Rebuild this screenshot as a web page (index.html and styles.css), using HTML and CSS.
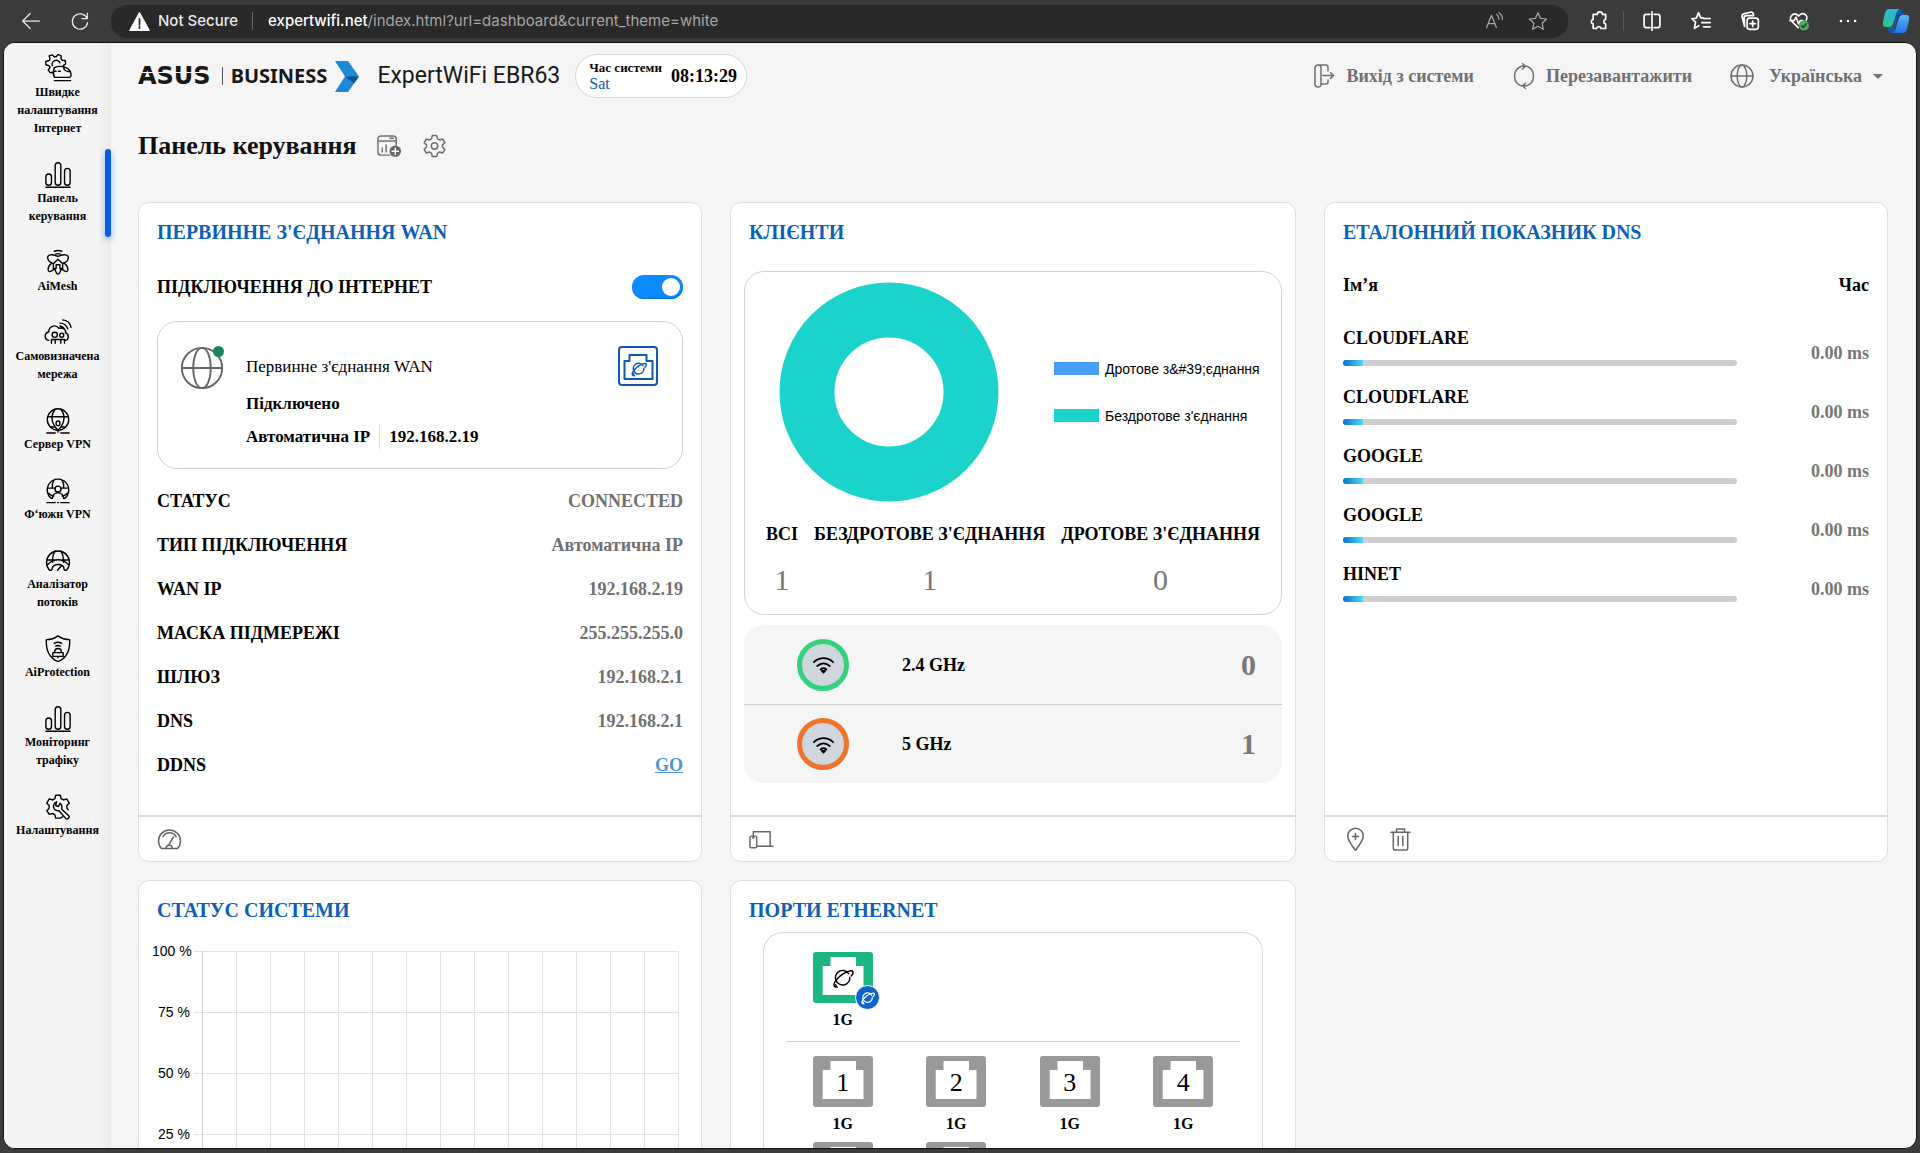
FILE: index.html
```html
<!DOCTYPE html>
<html lang="uk">
<head>
    <meta charset="UTF-8">
    <meta name="viewport" content="width=device-width, initial-scale=1.0">
    <title>ExpertWiFi EBR63</title>
    <link rel="stylesheet" href="styles.css">
</head>
<body>

<!-- shared icons -->
<svg class="sprite" aria-hidden="true">
    <symbol id="i-bars" viewBox="0 0 30 30">
        <rect x="2" y="15" width="6" height="12" rx="3"/>
        <rect x="12" y="3" width="6" height="24" rx="3"/>
        <rect x="22" y="9" width="6" height="18" rx="3"/>
        <path d="M2 29.2h26"/>
    </symbol>
    <symbol id="i-globe" viewBox="0 0 24 24">
        <circle cx="12" cy="12" r="11"/>
        <ellipse cx="12" cy="12" rx="4.8" ry="11"/>
        <path d="M1 12h22"/>
    </symbol>
    <symbol id="i-planet" viewBox="0 0 24 24">
        <path d="M18.6 8.2A7.6 7.6 0 1 0 18.4 16.500c1-1.300 1.400-3 1.200-4.600"/>
        <path d="M4.500 22c-3.600-2 .5-8 5.500-12C15 6 22 3.500 23 6c.4 1.200-.6 3-2 4.500M5 19.500c0 1.500.6 2.300 1.500 2.800"/>
    </symbol>
    <symbol id="i-wifi" viewBox="0 0 24 24">
        <path d="M2 9.500c6-5.500 14-5.500 20 0M5.500 13.500c4-3.600 9-3.600 13 0M9 17.200c2-1.600 4-1.600 6 0"/>
        <path class="fill" d="M10.500 18.800h3L12 20.500z"/>
    </symbol>
    <symbol id="i-gear" viewBox="0 0 24 24">
        <path d="M9.800 1.500h4.400l.7 3.200 2.200 1.300 3.100-1 2.200 3.800-2.400 2.100v2.200l2.400 2.100-2.200 3.800-3.100-1-2.200 1.300-.7 3.200H9.800l-.7-3.200-2.200-1.300-3.100 1-2.200-3.800L4 13.100v-2.200L1.600 8.800 3.800 5l3.100 1 2.200-1.300z"/>
    </symbol>
    <symbol id="i-port" viewBox="0 0 60 51">
        <path d="M3 0h54a3 3 0 0 1 3 3v45a3 3 0 0 1-3 3H3a3 3 0 0 1-3-3V3a3 3 0 0 1 3-3z"/>
        <path class="hole" d="M17.500 5H43v9h7.500v29H9.700V14h7.800z"/>
    </symbol>
</svg>

<div class="browser-bar">
    <button class="bar-btn" aria-label="Back"><svg viewBox="0 0 24 24"><path d="M22 12H3M11 3l-9 9 9 9"/></svg></button>
    <button class="bar-btn" aria-label="Reload"><svg viewBox="0 0 24 24"><path d="M20.500 9a9.200 9.200 0 1 0 .6 5M20.800 2.500V9h-6.500"/></svg></button>
    <div class="address">
        <svg class="warn" viewBox="0 0 24 24"><path d="M12 2 23 22H1z"/><path class="mark" d="M12 9v6.500M12 17.500v2"/></svg>
        <span class="not-secure">Not Secure</span>
        <span class="url"><b>expertwifi.net</b>/index.html?url=dashboard&amp;current_theme=white</span>
        <button class="addr-btn" aria-label="Read aloud"><svg viewBox="0 0 24 24"><path d="M3 20 9 5l6 15M5 15h8M15 4c2 1.500 3 3.500 3 6M18 2c3 2 4.200 5 4 8"/></svg></button>
        <button class="addr-btn" aria-label="Add to favourites"><svg viewBox="0 0 24 24"><path d="m12 2 3 6.800 7.300.8-5.400 5 1.500 7.400-6.400-3.700L5.600 22l1.500-7.400-5.400-5L9 8.800z"/></svg></button>
    </div>
    <button class="bar-btn bright ext" aria-label="Extensions"><svg viewBox="0 0 24 24"><path d="M8 4h2a3 3 0 0 1 6 0h4v6a2.800 2.800 0 0 0 0 5.500V21h-5.500a2.800 2.800 0 0 0-5.500 0H5v-5.500a2.800 2.800 0 0 1 0-5.500V4z"/></svg></button>
    <button class="bar-btn bright" aria-label="Split screen"><svg viewBox="0 0 24 24"><path d="M9.500 4H5a2.500 2.500 0 0 0-2.500 2.500v11A2.500 2.500 0 0 0 5 20h4.500M14.500 4H19a2.500 2.500 0 0 1 2.500 2.500v11A2.500 2.500 0 0 1 19 20h-4.500M12 1v22"/></svg></button>
    <button class="bar-btn bright" aria-label="Favourites"><svg viewBox="0 0 24 24"><path d="M15 8.500 11.500 8 9 2 6.500 8.500l-5.500.8 4.500 4L4 21l5.500-3.500M15 9h8M13 14h10M15 19h8"/></svg></button>
    <button class="bar-btn bright" aria-label="Collections"><svg viewBox="0 0 24 24"><rect x="8.500" y="8.500" width="13.500" height="13.500" rx="3"/><path d="M15.200 12v6.500M12 15.200h6.500M5.500 18.500 2.500 7a3 3 0 0 1 2-3.500l8-2a3 3 0 0 1 3.500 2l.5 2H8a3 3 0 0 0-3 3z"/></svg></button>
    <button class="bar-btn bright" aria-label="Browser essentials"><svg viewBox="0 0 24 24"><path d="M11 20 3 12c-4-5 3-12 8.500-6C17-.5 24 6 20.500 11M1 11.500h5l2.500-4 3 8 2-4h3"/><circle class="ok" cx="18" cy="17.500" r="6"/><path class="tick" d="m15.200 17.800 2 2 3.600-4.400"/></svg></button>
    <button class="bar-btn bright" aria-label="Menu"><svg viewBox="0 0 24 24"><path class="dots" d="M3.500 12h.1M12 12h.1M20.500 12h.1"/></svg></button>
    <button class="bar-btn copilot" aria-label="Copilot">
        <svg viewBox="0 0 28 28">
            <defs>
                <linearGradient id="cp1" x1="0" y1="0" x2="0" y2="1"><stop offset="0" stop-color="#2bb7e3"/><stop offset="1" stop-color="#35c08f"/></linearGradient>
                <linearGradient id="cp2" x1="0" y1="0" x2="0" y2="1"><stop offset="0" stop-color="#5fb8ff"/><stop offset="1" stop-color="#1b74ea"/></linearGradient>
            </defs>
            <path fill="#1556a8" d="M12 2h6q3 0 4 6h-6L12 26H9q-3 0-3-6h6z"/>
            <path fill="url(#cp1)" d="M7 2h10q-2 1-3 5l-3 10q-1 3-4 3H4q-4 0-3-5l2-9q1-4 4-4z"/>
            <path fill="url(#cp2)" d="M21 8h3q4 0 3 5l-2 9q-1 4-4 4H11q2-1 3-5l3-10q1-3 4-3z"/>
        </svg>
    </button>
</div>

<div class="frame">
    <nav class="sidebar">
        <a href="#" class="nav-item">
            <svg viewBox="0 0 30 30"><path d="M10.500 22.500l-1-3-3 .5-2-3 2-2.500-.8-1.800L2 11.500V8l3.500-1 1-1.800L5.500 2l3.300-1L11 3h2l2.200-2.500 3.200 1.500-.2 3.200 1.500 1.500 3 .3.500 3.500-2.500 2M9 12.500a4.200 4.200 0 0 1 8-3"/><path d="M11 14.500c8-3 18 0 18 8 0 2-1 2.500-2.500 2.500H12c-2 0-2.500-5-1-10.500zM21 14.500c.3 3 2 4.500 7 4.500M10.500 18.500h2.500M15.500 18.500h2M11 28.500h17.500"/></svg>
            <span>Швидке налаштування Інтернет</span>
        </a>
        <a href="#" class="nav-item active">
            <svg><use href="#i-bars"/></svg>
            <span>Панель керування</span>
        </a>
        <a href="#" class="nav-item">
            <svg viewBox="0 0 30 30"><path d="M11 3.500c2.500-1 5.500-1 8 0M12.500 6.500c1.500-.6 3.500-.6 5 0"/><path d="M15 9c-6-3-12-2-11 2 .6 3 3 4.500 5 5-3 2-5 5-4.500 8 1 3 5 0 7-2 1 4 2 6 3.500 6s2.500-2 3.500-6c2 2 6 5 7 2 .5-3-1.500-6-4.500-8 2-.5 4.400-2 5-5 1-4-5-5-11-2zM10 17l5-5 5 5v5h-3v-4h-4v4h-3z"/></svg>
            <span>AiMesh</span>
        </a>
        <a href="#" class="nav-item">
            <svg viewBox="0 0 30 30"><path d="M5 24c-5-1-5-8 0-9 0-6 7-9 11-4 5-1 8 2 7 5 4 1 4 7 0 8M8 27v-4h4v4M18 27v-4h4v4M12 23h6M17 5.500c4 0 7 2 8.500 6M20 2c5 .5 8 3.500 9 8M17 8.500c2.500.3 4 1.500 5 3.500"/><circle cx="11.500" cy="18" r="2.800"/><circle cx="19" cy="18.500" r="2.200"/></svg>
            <span>Самовизначена мережа</span>
        </a>
        <a href="#" class="nav-item">
            <svg viewBox="0 0 30 30"><circle cx="15" cy="14.500" r="11.500"/><path d="M4 11.500h22M7 22.500h4M19 22.500h4M12 3.500C9 7 8.500 10 8.500 12c0 6 3 10.500 6.500 14 3.500-3.500 6.500-8 6.500-14 0-2-.5-5-3.500-8.500M15 26v2M3 29h9M18 29h9"/><rect x="13" y="16" width="4" height="5" rx="2"/></svg>
            <span>Сервер VPN</span>
        </a>
        <a href="#" class="nav-item">
            <svg viewBox="0 0 30 30"><path d="M8 24a11.500 11.500 0 1 1 14 0M4 13h8M18 13h8M12 3.500C9 6 8.500 9 9 13M18 3.500c3 2.500 3.500 5.500 3 9.500M9 24c0-8 12-8 12 0M5 18.500c2 2 4 3 5.500 3M25 18.500c-2 2-4 3-5.500 3M3 28.500h9M18 28.500h9M14.500 28.500h1"/><circle cx="15" cy="14" r="3.200"/></svg>
            <span>Ф‘южн VPN</span>
        </a>
        <a href="#" class="nav-item">
            <svg viewBox="0 0 30 30"><path d="M5.500 25.500a12.300 12.300 0 1 1 19 0c-1.500 1-2.500.5-3-.5.500-7-12.500-7-13 0-.5 1-1.500 1.500-3 .5zM3 15h7M20 15h7M12.500 5C9.500 8 9 12 9.200 17.500M17.500 5c3 3 3.500 7 3.300 12.500M4 20c6-7 16-7 22 0M14.500 26l4-4.500"/></svg>
            <span>Аналізатор потоків</span>
        </a>
        <a href="#" class="nav-item">
            <svg viewBox="0 0 30 30"><path d="M15 2c4 3 8 4 12.500 4 .5 10-1.500 19-12.500 23.500C4 25 2 16 2.500 6 7 6 11 5 15 2zM11 10c2.500-1.500 5.500-1.500 8 0M12.500 13c1.500-.8 3.500-.8 5 0M11.500 20v-1.500c0-4 7-4 7 0V20M9.500 20h11v4h-11zM15 24.500v1"/></svg>
            <span>AiProtection</span>
        </a>
        <a href="#" class="nav-item">
            <svg><use href="#i-bars"/></svg>
            <span>Моніторинг трафіку</span>
        </a>
        <a href="#" class="nav-item">
            <svg viewBox="0 0 30 30"><path d="M20 26.500l-2.500 1.500h-5l-.8-3.500-2.500-1.500-3.500 1L3 20l2.500-2.500v-3L3 12l2.500-4.500 3.700 1 2.500-1.500.8-3.500h5l.8 3.500 2.500 1.500 3.700-1L27 12l-2.500 2.500v3L26 19"/><path d="M13.500 10.500a5 5 0 0 0-2.500 7.500c1.500 2 3.500 2.200 5 2l7 8c2 2 5-.5 3.500-2.500l-7.500-7c.5-2.500 0-5-1.500-6.500l-2 3.500-3-1z"/></svg>
            <span>Налаштування</span>
        </a>
    </nav>

    <main class="content">
        <header class="top">
            <div class="logo">
                <span class="asus">ASUS</span>
                <span class="business">BUSINESS</span>
                <svg class="chevron" viewBox="0 0 24 31"><path fill="#1d87d8" d="M0 0h13l11 15.500L13 31H0l10-15.500z"/><path fill="#14538f" d="M10 15.500h14L19 22.500z"/></svg>
            </div>
            <span class="model">ExpertWiFi EBR63</span>
            <div class="clock">
                <div class="clock-label"><b>Час системи</b><span>Sat</span></div>
                <time>08:13:29</time>
            </div>
            <div class="top-actions">
                <a href="#"><svg viewBox="0 0 24 24"><path d="M9 21.500c-.5 1-1.500 1.500-3 1.500-2 0-3-1.500-3-3V4c0-1.500 1-3 3-3s3 1.500 3 3zM6 1h8c1.500 0 2 1 2 2.500V7M9 20h5c1.500 0 2-1 2-2v-2M11 11.500h10M18.500 8.500l3 3-3 3"/></svg>Вихід з системи</a>
                <a href="#"><svg viewBox="0 0 24 24"><path d="M9.500 22A10.500 10.500 0 0 1 9.500 2.200h3.500M10.500-.5l3 2.700-3 2.700M14.500 2A10.500 10.500 0 0 1 14.500 21.800H11M13.500 24.500l-3-2.700 3-2.700"/></svg>Перезавантажити</a>
                <label class="lang">
                    <svg><use href="#i-globe"/></svg>
                    <select aria-label="Мова"><option>Українська</option></select>
                    <i class="caret"></i>
                </label>
            </div>
        </header>

        <div class="page-title">
            <h1>Панель керування</h1>
            <button aria-label="Додати віджет"><svg viewBox="0 0 26 24"><path d="M13 21.500H4a3 3 0 0 1-3-3v-14a3 3 0 0 1 3-3h13a3 3 0 0 1 3 3V11M1 6.800h19M13.500 4h3.500M5.500 14v4M9.500 11v7"/><circle class="dark" cx="19" cy="17.500" r="6"/><path class="plus" d="M19 14.200v6.600M15.700 17.500h6.600"/></svg></button>
            <button aria-label="Налаштування"><svg viewBox="0 0 24 24"><use href="#i-gear"/><circle cx="12" cy="12" r="3.200"/></svg></button>
        </div>

        <div class="cards">
            <section class="card">
                <h2>ПЕРВИННЕ З'ЄДНАННЯ WAN</h2>
                <div class="card-body">
                    <label class="switch-row">ПІДКЛЮЧЕННЯ ДО ІНТЕРНЕТ
                        <input type="checkbox" class="switch" checked>
                    </label>
                    <div class="wan-box">
                        <div class="wan-globe"><svg><use href="#i-globe"/></svg></div>
                        <div class="wan-text">
                            <p class="wan-name">Первинне з'єднання WAN</p>
                            <p>Підключено</p>
                            <p class="wan-ip"><span>Автоматична IP</span><span>192.168.2.19</span></p>
                        </div>
                        <svg class="wan-port" viewBox="0 0 40 40"><rect x="1" y="1" width="38" height="38" rx="3"/><path d="M11.500 9h17v6h6v18h-28V15h5z"/><use href="#i-planet" x="12" y="14" width="17" height="17"/></svg>
                    </div>
                    <dl class="info">
                        <div><dt>СТАТУС</dt><dd>CONNECTED</dd></div>
                        <div><dt>ТИП ПІДКЛЮЧЕННЯ</dt><dd>Автоматична IP</dd></div>
                        <div><dt>WAN IP</dt><dd>192.168.2.19</dd></div>
                        <div><dt>МАСКА ПІДМЕРЕЖІ</dt><dd>255.255.255.0</dd></div>
                        <div><dt>ШЛЮЗ</dt><dd>192.168.2.1</dd></div>
                        <div><dt>DNS</dt><dd>192.168.2.1</dd></div>
                        <div><dt>DDNS</dt><dd><a href="#">GO</a></dd></div>
                    </dl>
                </div>
                <footer>
                    <button aria-label="Швидкість"><svg viewBox="0 0 24 24"><path d="M4 21.500A11 11 0 1 1 20 21.500zM5.500 9.500c3-5 10-5 13 0M16 10l-4.500 7.500"/><path d="M8.500 21.500c0-4.500 6-4.500 6.500 0"/></svg></button>
                </footer>
            </section>

            <section class="card">
                <h2>КЛІЄНТИ</h2>
                <div class="card-body wide">
                    <div class="clients-box">
                        <div class="clients-chart">
                            <svg class="donut" viewBox="0 0 220 220"><circle cx="110" cy="110" r="82"/></svg>
                            <ul class="legend">
                                <li class="wired">Дротове з&amp;#39;єднання</li>
                                <li class="wireless">Бездротове з'єднання</li>
                            </ul>
                        </div>
                        <table class="totals">
                            <tr><th>ВСІ</th><th>БЕЗДРОТОВЕ З'ЄДНАННЯ</th><th>ДРОТОВЕ З'ЄДНАННЯ</th></tr>
                            <tr><td>1</td><td>1</td><td>0</td></tr>
                        </table>
                    </div>
                    <ul class="bands">
                        <li><span class="band green"><svg><use href="#i-wifi"/></svg></span><b>2.4 GHz</b><span class="count">0</span></li>
                        <li><span class="band orange"><svg><use href="#i-wifi"/></svg></span><b>5 GHz</b><span class="count">1</span></li>
                    </ul>
                </div>
                <footer>
                    <button aria-label="Пристрої"><svg viewBox="0 0 26 24"><rect x="1" y="9" width="7" height="12" rx="1"/><path d="M4.500 9V4.500H22V19M8 19.500h17M4 9v2h1V9"/></svg></button>
                </footer>
            </section>

            <section class="card">
                <h2>ЕТАЛОННИЙ ПОКАЗНИК DNS</h2>
                <div class="card-body">
                    <table class="dns">
                        <thead><tr><th>Ім’я</th><th>Час</th></tr></thead>
                        <tbody>
                            <tr><td>CLOUDFLARE<div class="bar"><i></i></div></td><td>0.00 ms</td></tr>
                            <tr><td>CLOUDFLARE<div class="bar"><i></i></div></td><td>0.00 ms</td></tr>
                            <tr><td>GOOGLE<div class="bar"><i></i></div></td><td>0.00 ms</td></tr>
                            <tr><td>GOOGLE<div class="bar"><i></i></div></td><td>0.00 ms</td></tr>
                            <tr><td>HINET<div class="bar"><i></i></div></td><td>0.00 ms</td></tr>
                        </tbody>
                    </table>
                </div>
                <footer>
                    <button aria-label="Додати"><svg viewBox="0 0 24 24"><path d="M12 23.500C7.500 17.500 4.200 13 4.200 9a7.800 7.800 0 0 1 15.600 0c0 4-3.300 8.500-7.800 14.500zM12 6.500v6M9 9.500h6"/></svg></button>
                    <button aria-label="Видалити"><svg viewBox="0 0 24 24"><path d="M2.500 5.200h19M8 5V2h8v3M4.800 5.500V21.500c0 1 .5 1.500 1.500 1.500h11.400c1 0 1.500-.5 1.500-1.500V5.500M9.700 9.500v9M14.300 9.500v9"/></svg></button>
                </footer>
            </section>

            <section class="card">
                <h2>СТАТУС СИСТЕМИ</h2>
                <div class="card-body">
                    <div class="chart">
                        <ol class="axis"><li>100 %</li><li>75 %</li><li>50 %</li><li>25 %</li></ol>
                        <div class="plot"><div class="grid"></div></div>
                    </div>
                </div>
            </section>

            <section class="card">
                <h2>ПОРТИ ETHERNET</h2>
                <div class="card-body">
                    <div class="ports-box">
                        <div class="ports">
                            <div class="port wan">
                                <div class="jack">
                                    <svg class="shell"><use href="#i-port"/></svg>
                                    <svg class="planet"><use href="#i-planet"/></svg>
                                    <span class="badge"><svg><use href="#i-planet"/></svg></span>
                                </div>
                                1G
                            </div>
                        </div>
                        <hr>
                        <div class="ports">
                            <div class="port"><div class="jack"><svg class="shell"><use href="#i-port"/></svg><span>1</span></div>1G</div>
                            <div class="port"><div class="jack"><svg class="shell"><use href="#i-port"/></svg><span>2</span></div>1G</div>
                            <div class="port"><div class="jack"><svg class="shell"><use href="#i-port"/></svg><span>3</span></div>1G</div>
                            <div class="port"><div class="jack"><svg class="shell"><use href="#i-port"/></svg><span>4</span></div>1G</div>
                            <div class="port"><div class="jack"><svg class="shell"><use href="#i-port"/></svg></div></div>
                            <div class="port"><div class="jack"><svg class="shell"><use href="#i-port"/></svg></div></div>
                        </div>
                    </div>
                </div>
            </section>
        </div>
    </main>
</div>

</body>
</html>
```
FILE: styles.css
```css
* {
    margin: 0;
    padding: 0;
    box-sizing: border-box;
}

body {
    display: flex;
    flex-direction: column;
    height: 100vh;
    overflow: hidden;
    background-color: #3b3b3b;
    color: #000;
    font-family: "Liberation Serif", "Times New Roman", serif;
    font-size: 18px;
    line-height: 24px;
}

svg {
    display: block;
    fill: none;
    stroke: currentColor;
    stroke-width: 1.5;
    stroke-linecap: round;
    stroke-linejoin: round;
}

button {
    background: none;
    border: none;
    color: inherit;
    cursor: pointer;
}

a {
    color: inherit;
    text-decoration: none;
}

ul,
ol {
    list-style: none;
}

.sprite {
    position: absolute;
    width: 0;
    height: 0;
}

/* browser bar */
.browser-bar {
    display: flex;
    align-items: center;
    flex-shrink: 0;
    height: 42px;
    padding-left: 6px;
    color: #e8e8e8;
    font-family: Inter, sans-serif;
    font-size: 15px;
}

.bar-btn {
    display: flex;
    justify-content: center;
    flex: 0 0 49px;
}

.bar-btn svg,
.addr-btn svg {
    width: 20px;
    height: 20px;
}

.bar-btn.bright {
    color: #fff;
}

.bar-btn.bright svg {
    stroke-width: 2;
}

.bar-btn.ext {
    margin-left: 7px;
    margin-right: 3px;
    border-right: 1px solid #5a5a5a;
}

.bar-btn .ok {
    fill: #4fae5b;
    stroke: none;
}

.bar-btn .tick {
    stroke: #1d4422;
}

.bar-btn .dots {
    stroke-width: 3;
}

.bar-btn.copilot {
    flex-basis: 48px;
}

.copilot svg {
    width: 28px;
    height: 28px;
    stroke: none;
}

.address {
    display: flex;
    align-items: center;
    flex: 1;
    height: 33px;
    margin-left: 7px;
    padding: 0 10px 0 18px;
    border-radius: 16px;
    background-color: #292929;
    white-space: nowrap;
}

.warn {
    width: 21px;
    height: 21px;
    margin-right: 8px;
    fill: #fff;
    stroke: #fff;
}

.warn .mark {
    stroke: #292929;
    stroke-width: 2;
}

.not-secure {
    padding-right: 14px;
    margin-right: 15px;
    border-right: 1px solid #6b6b6b;
    line-height: 18px;
    font-weight: 500;
}

.url {
    flex: 1;
    color: #a6a6a6;
}

.url b {
    color: #fff;
    font-weight: 500;
}

.addr-btn {
    margin-left: 4px;
    padding: 0 10px;
    color: #a6a6a6;
}

/* page frame */
.frame {
    display: flex;
    flex: 1;
    min-height: 0;
    margin: 0 3px 4px;
    border: 1px solid #111;
    border-radius: 12px;
    overflow: hidden;
    background-color: #f5f5f5;
}

.sidebar {
    flex: 0 0 107px;
    background: linear-gradient(to right, #f4f4f4 92px, #ebebeb);
}

.nav-item {
    position: relative;
    display: flex;
    flex-direction: column;
    align-items: center;
    padding: 10px 8px 12px;
    font-size: 12px;
    font-weight: bold;
    line-height: 18px;
    text-align: center;
}

.nav-item svg {
    width: 30px;
    height: 30px;
    padding: 1px;
}

.nav-item.active::after {
    content: "";
    position: absolute;
    top: 0;
    right: 0;
    bottom: 0;
    width: 6px;
    border-radius: 3px;
    background-color: #0a5fd8;
    box-shadow: 0 3px 6px rgba(0, 90, 220, 0.4);
}

.content {
    flex: 1;
    min-width: 0;
    padding: 0 28px 0 27px;
}

/* header */
.top {
    display: flex;
    align-items: center;
    height: 66px;
}

.logo {
    display: flex;
    align-items: center;
}

.asus {
    position: relative;
    color: #181818;
    font-family: "DejaVu Sans", sans-serif;
    font-size: 24px;
    font-weight: bold;
}

.asus::after {
    content: "";
    position: absolute;
    left: 0;
    right: 0;
    top: 8px;
    height: 1px;
    background-color: #f5f5f5;
}

.business {
    margin: 0 8px 0 11px;
    padding-left: 8px;
    border-left: 1px solid #555;
    color: #181818;
    font-family: "Noto Sans", sans-serif;
    font-size: 20px;
    font-weight: bold;
    line-height: 18px;
}

.chevron {
    width: 24px;
    height: 31px;
    stroke: none;
}

.model {
    margin: 0 15px 0 18px;
    color: #181818;
    font-family: Roboto, sans-serif;
    font-size: 23px;
}

.clock {
    display: flex;
    align-items: center;
    gap: 9px;
    height: 44px;
    padding: 0 9px 0 13px;
    border: 1px solid #d5d5d5;
    border-radius: 22px;
    background-color: #fff;
}

.clock-label {
    display: flex;
    flex-direction: column;
    font-size: 13px;
    line-height: 16px;
}

.clock-label span {
    color: #0a5bb5;
    font-size: 16px;
}

.clock time {
    font-weight: bold;
}

.top-actions {
    display: flex;
    align-items: center;
    gap: 38px;
    margin-left: auto;
    padding-right: 5px;
    color: #707070;
    font-weight: bold;
}

.top-actions a,
.lang {
    display: flex;
    align-items: center;
    gap: 10px;
}

.top-actions svg {
    width: 24px;
    height: 24px;
    overflow: visible;
    stroke-width: 1.5;
}

.lang select {
    appearance: none;
    border: none;
    background: none;
    padding: 0 0 0 5px;
    color: inherit;
    font: inherit;
}

.caret {
    border: 5px solid transparent;
    border-top-color: #707070;
    border-bottom: none;
}

.page-title {
    display: flex;
    align-items: center;
    gap: 20px;
    height: 74px;
    margin-bottom: 19px;
    color: #707070;
}

.page-title h1 {
    color: #111;
    font-size: 26px;
    line-height: 32px;
}

.page-title svg {
    width: 25px;
    height: 24px;
}

.page-title .dark {
    fill: #666;
    stroke: none;
}

.page-title .plus {
    stroke: #fff;
}

/* cards */
.cards {
    display: grid;
    grid-template-columns: repeat(3, 1fr);
    gap: 18px 28px;
}

.card {
    display: flex;
    flex-direction: column;
    min-height: 660px;
    border: 1px solid #dedede;
    border-radius: 11px;
    background-color: #fff;
}

.card h2 {
    padding: 16px 18px 0;
    color: #0d5fb8;
    font-size: 20px;
    line-height: 26px;
}

.card-body {
    flex: 1;
    padding: 0 18px;
}

.card-body.wide {
    padding: 0 13px;
}

.card footer {
    display: flex;
    align-items: center;
    gap: 20px;
    height: 46px;
    padding: 0 18px;
    border-top: 2px solid #dcdcdc;
    color: #666;
}

.card footer svg {
    width: 25px;
    height: 24px;
}

/* wan */
.switch-row {
    display: flex;
    align-items: center;
    justify-content: space-between;
    margin: 30px 0 22px;
    font-weight: bold;
}

.switch {
    appearance: none;
    display: flex;
    justify-content: flex-end;
    width: 51px;
    height: 24px;
    padding: 3px;
    border-radius: 12px;
    background-color: #0a8bff;
    box-shadow: inset 0 -1px 1px #0a6ad0;
}

.switch::before {
    content: "";
    width: 18px;
    height: 18px;
    border-radius: 50%;
    background-color: #fff;
}

.wan-box {
    display: flex;
    align-items: flex-start;
    height: 148px;
    padding: 24px 24px 0 22px;
    border: 1px solid #d2d2d2;
    border-radius: 20px;
    font-size: 17px;
    font-weight: bold;
}

.wan-globe {
    position: relative;
    margin-right: 22px;
    color: #666;
}

.wan-globe svg {
    width: 44px;
    height: 44px;
    stroke-width: 1;
}

.wan-globe::after {
    content: "";
    position: absolute;
    top: 0;
    right: 0;
    width: 11px;
    height: 11px;
    border-radius: 50%;
    background-color: #17845a;
}

.wan-text {
    flex: 1;
    padding-top: 9px;
}

.wan-name {
    margin-bottom: 13px;
    font-weight: normal;
}

.wan-ip {
    display: flex;
    gap: 9px;
    margin-top: 9px;
}

.wan-ip span + span {
    padding-left: 9px;
    border-left: 1px solid #ddd;
}

.wan-port {
    width: 40px;
    height: 40px;
    color: #0f59b0;
    stroke-width: 2;
}

.info {
    margin-top: 10px;
    font-weight: bold;
}

.info div {
    display: flex;
    align-items: center;
    justify-content: space-between;
    height: 44px;
}

.info dd {
    color: #707070;
}

.info a {
    color: #4695dd;
    text-decoration: underline;
}

/* clients */
.clients-box {
    height: 344px;
    margin-top: 26px;
    padding: 10px 13px 0;
    border: 1px solid #d2d2d2;
    border-radius: 20px;
}

.clients-chart {
    display: flex;
    align-items: center;
    padding-left: 21px;
}

.donut {
    width: 220px;
    height: 220px;
    stroke: #1bd3cb;
    stroke-width: 55;
}

.legend {
    margin-left: 55px;
    font-family: "Liberation Sans", Arial, sans-serif;
    font-size: 14px;
    line-height: 14px;
}

.legend li {
    display: flex;
    align-items: center;
    gap: 6px;
    white-space: nowrap;
}

.legend li + li {
    margin-top: 33px;
}

.legend li::before {
    content: "";
    width: 45px;
    height: 13px;
    background-color: #4a9df8;
}

.legend .wireless::before {
    background-color: #1bd3cb;
}

.totals {
    margin: 20px auto 0;
    border-collapse: collapse;
    text-align: center;
    white-space: nowrap;
}

.totals th,
.totals td {
    padding: 0 8px;
}

.totals td {
    padding-top: 16px;
    color: #777;
    font-size: 30px;
    line-height: 36px;
}

.bands {
    margin-top: 10px;
    border-radius: 20px;
    background-color: #f5f5f5;
}

.bands li {
    display: flex;
    align-items: center;
    height: 79px;
    padding: 0 26px 0 53px;
}

.bands li + li {
    border-top: 1px solid #ccc;
}

.band {
    display: grid;
    place-items: center;
    width: 52px;
    height: 52px;
    margin-right: 53px;
    border: 5px solid #35d07a;
    border-radius: 50%;
    background-color: #cfd6de;
}

.band.orange {
    border-color: #ee742c;
}

.band svg {
    width: 23px;
    height: 23px;
    stroke-width: 2;
}

.fill {
    fill: #000;
}

.count {
    margin-left: auto;
    color: #777;
    font-size: 30px;
    font-weight: bold;
}

/* dns */
.dns {
    width: 100%;
    margin-top: 27px;
    border-collapse: collapse;
    font-weight: bold;
}

.dns th {
    height: 42px;
    padding-bottom: 16px;
    text-align: left;
}

.dns td {
    height: 59px;
}

.dns td:first-child {
    width: 75%;
    padding-top: 4px;
}

.dns th:last-child,
.dns td:last-child {
    text-align: right;
}

.dns td:last-child {
    padding-top: 18px;
    color: #777;
}

.bar {
    height: 6px;
    margin-top: 10px;
    border-radius: 3px;
    background-color: #cecece;
    overflow: hidden;
}

.bar i {
    display: block;
    width: 5%;
    height: 6px;
    background: linear-gradient(to right, #0a6fc8, #4fdcf5);
}

/* system status */
.chart {
    display: flex;
    margin: 21px 4px 0 -5px;
}

.axis {
    width: 38px;
    margin-right: 4px;
    font-family: "Liberation Sans", Arial, sans-serif;
    font-size: 14px;
    line-height: 14px;
    text-align: right;
    white-space: nowrap;
}

.axis li {
    height: 61px;
}

.plot {
    flex: 1;
    height: 245px;
    margin-top: 7px;
    padding-left: 8px;
    background: repeating-linear-gradient(to bottom, #e2e2e2 0 1px, transparent 1px 61px);
}

.grid {
    height: 100%;
    border-left: 1px solid #d0d0d0;
    background-image: linear-gradient(to right, transparent calc(100% - 1px), #e2e2e2 0);
    background-size: calc(100% / 14) 100%;
}

/* ethernet ports */
.ports-box {
    margin: 9px 14px 0;
    padding: 19px 22px 0;
    border: 1px solid #d8d8d8;
    border-bottom: none;
    border-radius: 20px 20px 0 0;
}

.ports {
    display: grid;
    grid-template-columns: repeat(4, 1fr);
    row-gap: 6px;
}

.ports-box hr {
    margin: 9px 0 14px;
    border: none;
    border-top: 1px solid #d0d0d0;
}

.port {
    display: flex;
    flex-direction: column;
    align-items: center;
    gap: 5px;
    font-size: 16px;
    font-weight: bold;
}

.jack {
    position: relative;
    display: grid;
    place-items: center;
    width: 60px;
    height: 51px;
}

.jack > * {
    grid-area: 1 / 1;
}

.jack span {
    padding-top: 3px;
    font-size: 26px;
    font-weight: normal;
}

.shell {
    width: 60px;
    height: 51px;
    color: #999;
    fill: #999;
    stroke: none;
}

.wan .shell {
    fill: #1cb584;
}

.hole {
    fill: #fff;
}

.planet {
    width: 23px;
    height: 23px;
}

.jack .badge {
    position: absolute;
    right: -7px;
    bottom: -7px;
    display: grid;
    place-items: center;
    width: 25px;
    height: 25px;
    padding: 0;
    border: 1px solid #fff;
    border-radius: 50%;
    background-color: #0d62cc;
    color: #fff;
}

.badge svg {
    width: 15px;
    height: 15px;
    stroke-width: 2;
}
```
